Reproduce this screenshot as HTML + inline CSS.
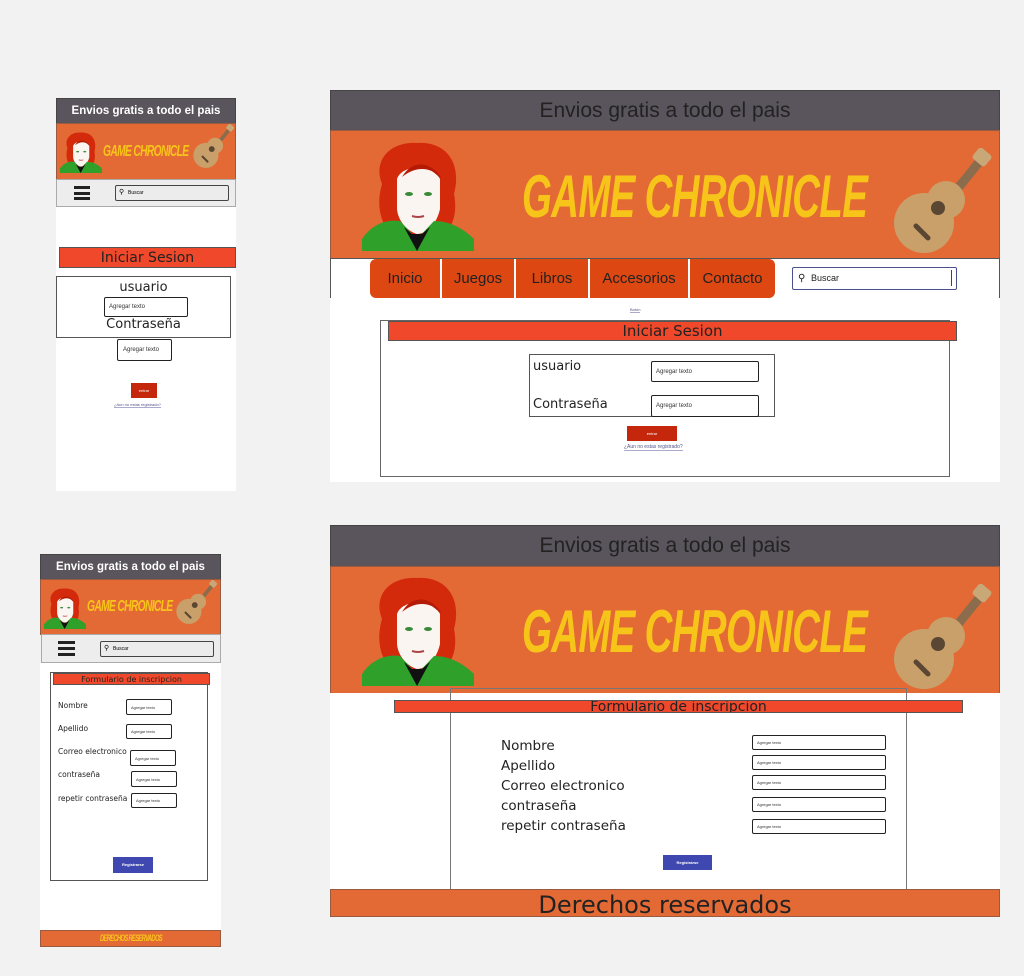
<!DOCTYPE html>
<html><head><meta charset="utf-8"><style>
*{margin:0;padding:0;box-sizing:border-box}
body{width:1024px;height:976px;background:#f2f2f2;position:relative;overflow:hidden;font-family:"Liberation Sans",sans-serif}
.a{position:absolute}
.top{background:#5a545c;border:1px solid #444;display:flex;align-items:center;justify-content:center}
.or{background:#e46a35;border:1px solid #9a5a40}
.w{background:#fff}
.title{font-family:"Liberation Sans",sans-serif;font-weight:bold;font-style:italic;color:#f7c51a;transform:scaleX(.64);transform-origin:left center;letter-spacing:-1px;white-space:nowrap}
.inp{background:#fff;border:1px solid #222;border-radius:2px;font-size:6px;color:#333;display:flex;align-items:center;padding-left:4px}
.lbl{font-family:"DejaVu Sans",sans-serif;color:#222}
</style></head><body>
<svg width="0" height="0" style="position:absolute">
<defs>
<symbol id="guy" viewBox="0 0 112 112">
<path d="M20 45 C10 20 30 2 55 4 C85 2 100 25 92 55 C96 75 90 90 80 95 L30 95 C18 85 14 65 20 45Z" fill="#d42a0c"/>
<path d="M35 40 C40 25 70 25 78 40 L78 70 C74 88 62 95 55 95 C45 92 36 82 35 70Z" fill="#fbf5f2"/>
<path d="M40 38 C50 20 70 22 80 40 L70 32 C60 28 50 30 40 38Z" fill="#b51a05"/>
<path d="M0 112 L0 100 C10 85 25 80 38 82 L55 100 L72 82 C88 82 102 90 112 100 L112 112Z" fill="#2fa02a"/>
<path d="M42 88 L55 112 L68 88 L60 95 L50 95Z" fill="#111"/>
<ellipse cx="47" cy="55" rx="4" ry="2" fill="#3a8a3a"/><ellipse cx="66" cy="55" rx="4" ry="2" fill="#3a8a3a"/>
<path d="M50 77 Q56 79 62 77" stroke="#a44" stroke-width="2" fill="none"/>
</symbol>
<symbol id="gtr" viewBox="0 0 110 110">
<path d="M98 8 L60 55" stroke="#8b6d4e" stroke-width="9" stroke-linecap="round"/>
<rect x="88" y="2" width="16" height="14" rx="3" fill="#c9a878" transform="rotate(40 96 9)"/>
<circle cx="60" cy="52" r="19" fill="#c9a06a"/>
<circle cx="38" cy="75" r="30" fill="#c9a06a"/>
<circle cx="52" cy="60" r="7" fill="#5a4632"/>
<path d="M30 78 L42 90" stroke="#5a4632" stroke-width="5" stroke-linecap="round"/>
</symbol>
</defs></svg>

<!-- Desktop 1 -->
<div class="a top" style="left:330px;top:90px;width:670px;height:41px;font-size:21px;color:#222">Envios gratis a todo el pais</div>
<div class="a or" style="left:330px;top:130px;width:670px;height:129px"></div>
<svg class="a" style="left:362px;top:139px" width="112" height="112"><use href="#guy"/></svg>
<div class="a title" style="left:522px;top:162px;font-size:60px">GAME CHRONICLE</div>
<svg class="a" style="left:886px;top:148px" width="110" height="110"><use href="#gtr"/></svg>
<div class="a w" style="left:330px;top:258px;width:670px;height:41px;border:1px solid #555"></div>
<div class="a" style="left:370px;top:259px;width:405px;height:39px;background:#dd4712;border-radius:6px;display:flex;font-size:15px;color:#222">
<div style="width:72px;display:flex;align-items:center;justify-content:center;border-right:2px solid #fff">Inicio</div>
<div style="width:74px;display:flex;align-items:center;justify-content:center;border-right:2px solid #fff">Juegos</div>
<div style="width:74px;display:flex;align-items:center;justify-content:center;border-right:2px solid #fff">Libros</div>
<div style="width:100px;display:flex;align-items:center;justify-content:center;border-right:2px solid #fff">Accesorios</div>
<div style="flex:1;display:flex;align-items:center;justify-content:center">Contacto</div></div>
<div class="a" style="left:792px;top:267px;width:165px;height:23px;border:1px solid #4a5090;border-radius:2px;font-size:9px;padding:5px 0 0 18px;color:#222">Buscar<span class="a" style="left:5px;top:5px;font-size:10px">&#9906;</span><span class="a" style="left:158px;top:2px;width:1px;height:16px;background:#444"></span></div>
<div class="a w" style="left:330px;top:298px;width:670px;height:184px"></div>
<div class="a" style="left:630px;top:307px;font-size:4px;color:#558;border-bottom:1px solid #aac">Botón</div>
<div class="a" style="left:380px;top:320px;width:570px;height:157px;border:1px solid #666"></div>
<div class="a lbl" style="left:388px;top:321px;width:569px;height:20px;background:#f0482a;border:1px solid #555;font-size:15px;text-align:center;line-height:19px">Iniciar Sesion</div>
<div class="a" style="left:529px;top:354px;width:246px;height:63px;border:1px solid #555"></div>
<div class="a lbl" style="left:533px;top:359px;font-size:13px">usuario</div>
<div class="a lbl" style="left:533px;top:397px;font-size:13px">Contraseña</div>
<div class="a inp" style="left:651px;top:361px;width:108px;height:21px">Agregar texto</div>
<div class="a inp" style="left:651px;top:395px;width:108px;height:22px">Agregar texto</div>
<div class="a" style="left:627px;top:426px;width:50px;height:15px;background:#c4270c;font-size:4px;color:#fff;text-align:center;line-height:15px">entrar</div>
<div class="a" style="left:624px;top:444px;font-size:5px;color:#558;border-bottom:1px solid #aac">¿Aun no estas registrado?</div>

<!-- Mobile 1 -->
<div class="a top" style="left:56px;top:98px;width:180px;height:26px;font-size:11.5px;color:#fff;font-weight:bold">Envios gratis a todo el pais</div>
<div class="a or" style="left:56px;top:123px;width:180px;height:57px"></div>
<svg class="a" style="left:60px;top:131px" width="42" height="42"><use href="#guy"/></svg>
<div class="a title" style="left:103px;top:143px;font-size:16px">GAME CHRONICLE</div>
<svg class="a" style="left:190px;top:124px" width="46" height="46"><use href="#gtr"/></svg>
<div class="a" style="left:56px;top:179px;width:180px;height:28px;background:#ededed;border:1px solid #aaa"></div>
<div class="a" style="left:74px;top:186px;width:16px;height:14px;border-top:3px solid #222;border-bottom:3px solid #222"><div style="margin-top:2.5px;height:3px;background:#222"></div></div>
<div class="a" style="left:115px;top:185px;width:114px;height:16px;border:1px solid #444;border-radius:2px;font-size:5px;padding:4px 0 0 12px;background:#ececec">Buscar<span class="a" style="left:3px;top:2px;font-size:7px">&#9906;</span></div>
<div class="a w" style="left:56px;top:207px;width:180px;height:284px"></div>
<div class="a lbl" style="left:59px;top:247px;width:177px;height:21px;background:#f0482a;border:1px solid #555;font-size:14px;text-align:center;line-height:20px">Iniciar Sesion</div>
<div class="a" style="left:56px;top:276px;width:175px;height:62px;border:1px solid #555"></div>
<div class="a lbl" style="left:56px;top:280px;width:175px;text-align:center;font-size:13px">usuario</div>
<div class="a inp" style="left:104px;top:297px;width:84px;height:20px;font-size:6px">Agregar texto</div>
<div class="a lbl" style="left:56px;top:317px;width:175px;text-align:center;font-size:13px">Contraseña</div>
<div class="a inp" style="left:117px;top:339px;width:55px;height:22px;font-size:6px;padding-left:5px">Agregar texto</div>
<div class="a" style="left:131px;top:383px;width:26px;height:15px;background:#c4270c;font-size:4px;color:#fff;text-align:center;line-height:15px">entrar</div>
<div class="a" style="left:114px;top:402px;font-size:4px;color:#558;border-bottom:1px solid #aac">¿Aun no estas registrado?</div>

<!-- Desktop 2 -->
<div class="a top" style="left:330px;top:525px;width:670px;height:42px;font-size:21px;color:#222">Envios gratis a todo el pais</div>
<div class="a or" style="left:330px;top:566px;width:670px;height:128px"></div>
<svg class="a" style="left:362px;top:574px" width="112" height="112"><use href="#guy"/></svg>
<div class="a title" style="left:522px;top:597px;font-size:60px">GAME CHRONICLE</div>
<svg class="a" style="left:886px;top:584px" width="110" height="110"><use href="#gtr"/></svg>
<div class="a w" style="left:330px;top:693px;width:670px;height:197px"></div>
<div class="a" style="left:450px;top:688px;width:457px;height:205px;border:1px solid #777"></div>
<div class="a lbl" style="left:394px;top:700px;width:569px;height:13px;background:#f0482a;border:1px solid #555;font-size:14px;text-align:center;line-height:13px;overflow:hidden">Formulario de inscripcion</div>
<div class="a lbl" style="left:501px;top:736px;font-size:13.5px;line-height:20px">Nombre<br>Apellido<br>Correo electronico<br>contraseña<br>repetir contraseña</div>
<div class="a inp" style="left:752px;top:735px;width:134px;height:15px;font-size:4px">Agregar texto</div>
<div class="a inp" style="left:752px;top:755px;width:134px;height:15px;font-size:4px">Agregar texto</div>
<div class="a inp" style="left:752px;top:775px;width:134px;height:15px;font-size:4px">Agregar texto</div>
<div class="a inp" style="left:752px;top:797px;width:134px;height:15px;font-size:4px">Agregar texto</div>
<div class="a inp" style="left:752px;top:819px;width:134px;height:15px;font-size:4px">Agregar texto</div>
<div class="a" style="left:663px;top:855px;width:49px;height:15px;background:#3f48b0;font-size:4px;color:#fff;text-align:center;line-height:15px;font-weight:bold">Registrarse</div>
<div class="a or lbl" style="left:330px;top:889px;width:670px;height:28px;font-size:24px;text-align:center;line-height:30px">Derechos reservados</div>

<!-- Mobile 2 -->
<div class="a top" style="left:40px;top:554px;width:181px;height:26px;font-size:11.5px;color:#fff;font-weight:bold">Envios gratis a todo el pais</div>
<div class="a or" style="left:40px;top:579px;width:181px;height:56px"></div>
<svg class="a" style="left:44px;top:587px" width="42" height="42"><use href="#guy"/></svg>
<div class="a title" style="left:87px;top:598px;font-size:16px">GAME CHRONICLE</div>
<svg class="a" style="left:173px;top:580px" width="46" height="46"><use href="#gtr"/></svg>
<div class="a" style="left:41px;top:634px;width:180px;height:29px;background:#ededed;border:1px solid #aaa"></div>
<div class="a" style="left:58px;top:641px;width:17px;height:15px;border-top:3px solid #222;border-bottom:3px solid #222"><div style="margin-top:3px;height:3px;background:#222"></div></div>
<div class="a" style="left:100px;top:641px;width:114px;height:16px;border:1px solid #444;border-radius:2px;font-size:5px;padding:4px 0 0 12px;background:#ececec">Buscar<span class="a" style="left:3px;top:2px;font-size:7px">&#9906;</span></div>
<div class="a w" style="left:40px;top:663px;width:181px;height:268px"></div>
<div class="a" style="left:50px;top:672px;width:158px;height:209px;border:1px solid #555"></div>
<div class="a lbl" style="left:53px;top:673px;width:157px;height:12px;background:#f0482a;border:1px solid #555;font-size:8px;text-align:center;line-height:11px">Formulario de inscripcion</div>
<div class="a lbl" style="left:58px;top:701px;font-size:7.5px">Nombre</div>
<div class="a lbl" style="left:58px;top:724px;font-size:7.5px">Apellido</div>
<div class="a lbl" style="left:58px;top:747px;font-size:7.5px">Correo electronico</div>
<div class="a lbl" style="left:58px;top:770px;font-size:7.5px">contraseña</div>
<div class="a lbl" style="left:58px;top:794px;font-size:7.5px">repetir contraseña</div>
<div class="a inp" style="left:126px;top:699px;width:46px;height:16px;font-size:4px">Agregar texto</div>
<div class="a inp" style="left:126px;top:724px;width:46px;height:15px;font-size:4px">Agregar texto</div>
<div class="a inp" style="left:130px;top:750px;width:46px;height:16px;font-size:4px">Agregar texto</div>
<div class="a inp" style="left:131px;top:771px;width:46px;height:16px;font-size:4px">Agregar texto</div>
<div class="a inp" style="left:131px;top:793px;width:46px;height:15px;font-size:4px">Agregar texto</div>
<div class="a" style="left:113px;top:857px;width:40px;height:16px;background:#3f48b0;font-size:4px;color:#fff;text-align:center;line-height:16px;font-weight:bold">Registrarse</div>
<div class="a or" style="left:40px;top:930px;width:181px;height:17px"></div>
<div class="a title" style="left:100px;top:933px;font-size:9px">DERECHOS RESERVADOS</div>
</body></html>
